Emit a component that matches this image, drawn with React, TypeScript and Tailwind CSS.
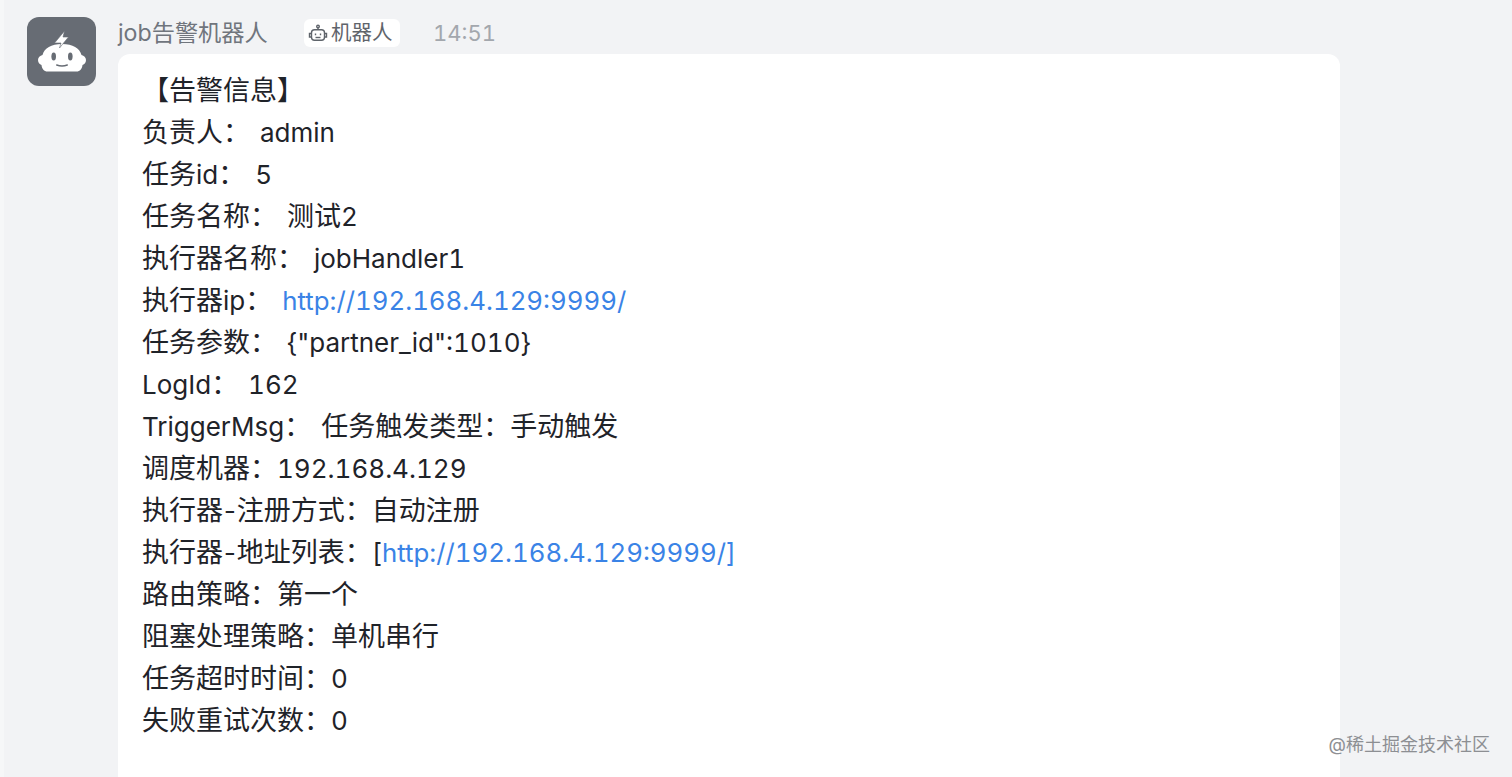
const lines: { label: string; value?: string; link?: string }[] = [
  { label: "负责人：", value: " admin" },
  { label: "任务id：", value: " 5" },
  { label: "任务名称：", value: " 测试2" },
  { label: "执行器名称：", value: " jobHandler1" },
  { label: "执行器ip：", value: " ", link: "http://192.168.4.129:9999/" },
  { label: "任务参数：", value: ' {"partner_id":1010}' },
  { label: "LogId：", value: " 162" },
  { label: "TriggerMsg：", value: " 任务触发类型：手动触发" },
  { label: "调度机器：", value: "192.168.4.129" },
  { label: "执行器-注册方式：", value: "自动注册" },
  { label: "执行器-地址列表：", value: "[", link: "http://192.168.4.129:9999/]" },
  { label: "路由策略：", value: "第一个" },
  { label: "阻塞处理策略：", value: "单机串行" },
  { label: "任务超时时间：", value: "0" },
  { label: "失败重试次数：", value: "0" },
];

// latin runs sit slightly smaller than the CJK text around them
function Mixed({ text }: { text: string }) {
  const runs = text.match(/[\x20-\x7e]+|[^\x20-\x7e]+/g) ?? [];
  return (
    <>
      {runs.map((run, i) => {
        if (run === "-") {
          return (
            <span key={i} className="mx-[-1.500px] text-[26px]">
              {run}
            </span>
          );
        }
        return /^[\x20-\x7e]/.test(run) ? (
          <span key={i} className="text-[26px]">
            {run}
          </span>
        ) : (
          run
        );
      })}
    </>
  );
}

function BotAvatar() {
  return (
    <div className="flex h-[69px] w-[69px] shrink-0 items-center justify-center rounded-[12px] bg-[#676c74]">
      <svg width="48" height="42" viewBox="0 0 48 42">
        <path
          d="M24 13C13 13 6.500 17 4.500 24 2 24.500 0 26.500 0 29s1.500 4.500 3.500 5c.5 4 2.500 6.500 6 6.500h29c3.500 0 5.500-2.500 6-6.500 2-.5 3.500-2.500 3.500-5s-2-4.500-4.500-5C41.500 17 35 13 24 13z"
          fill="#fff"
        />
        <path d="M26.500 0 16.500 12H23L21.500 17 30.500 6h-5.500z" fill="#fff" stroke="#676c74" strokeWidth="0.600" />
        <ellipse cx="15.700" cy="25.500" rx="2.300" ry="3.900" fill="#676c74" />
        <ellipse cx="32.300" cy="25.500" rx="2.300" ry="3.900" fill="#676c74" />
        <path d="M18.700 34c3.400 1.200 7.200 1.200 10.600 0" fill="none" stroke="#676c74" strokeWidth="1.400" strokeLinecap="round" />
      </svg>
    </div>
  );
}

function BotTagIcon() {
  return (
    <svg width="20" height="20" viewBox="0 0 20 20" fill="none" stroke="#5f646b" strokeWidth="1.400">
      <circle cx="10" cy="3.500" r="1.300" />
      <path d="M10 5v1.500" />
      <rect x="3.500" y="6.800" width="13" height="10.500" rx="3" />
      <path d="M3.500 10.500H1.500v3.500h2M16.500 10.500h2v3.500h-2" />
      <path d="M7.500 10.500v1.800M12.500 10.500v1.800" />
      <path d="M7.500 14.500h5" />
    </svg>
  );
}

export default function App() {
  return (
    <div className="relative flex h-[777px] w-full gap-[22px] overflow-hidden border-l-[4px] border-[#f6f7f8] bg-[#f2f3f5] pl-[23px] pt-[17px] font-['Inter','Noto_Sans_CJK_SC',sans-serif] tabular-nums text-[#1f2329]">
      <BotAvatar />
      <div className="flex w-[1222px] flex-col">
        <div className="mb-[5px] flex h-[32px] items-center text-[#70757d]">
          <span className="w-[186px] text-[23.200px]">job告警机器人</span>
          <span className="flex h-[28px] w-[96px] items-center gap-[3px] rounded-[6px] bg-white pl-[4px] text-[20.500px] text-[#5f646b]">
            <BotTagIcon />
            机器人
          </span>
          <span className="ml-[33px] text-[22px] text-[#a3a7ad]">14:51</span>
        </div>
        <div className="flex-1 rounded-t-[12px] bg-white pl-[24px] pt-[16px] text-[27px] leading-[42px]">
          <div className="h-[42px]">【告警信息】</div>
          {lines.map((line) => (
            <div key={line.label} className="h-[42px] whitespace-pre [word-spacing:3px]">
              <Mixed text={line.label} />
              <Mixed text={line.value ?? ""} />
              {line.link && <span className="text-[25.800px] text-[#3a83e6]">{line.link}</span>}
            </div>
          ))}
        </div>
      </div>
      <span className="absolute bottom-[19px] right-[22px] text-[18px] text-[#8d8f93]">@稀土掘金技术社区</span>
    </div>
  );
}
